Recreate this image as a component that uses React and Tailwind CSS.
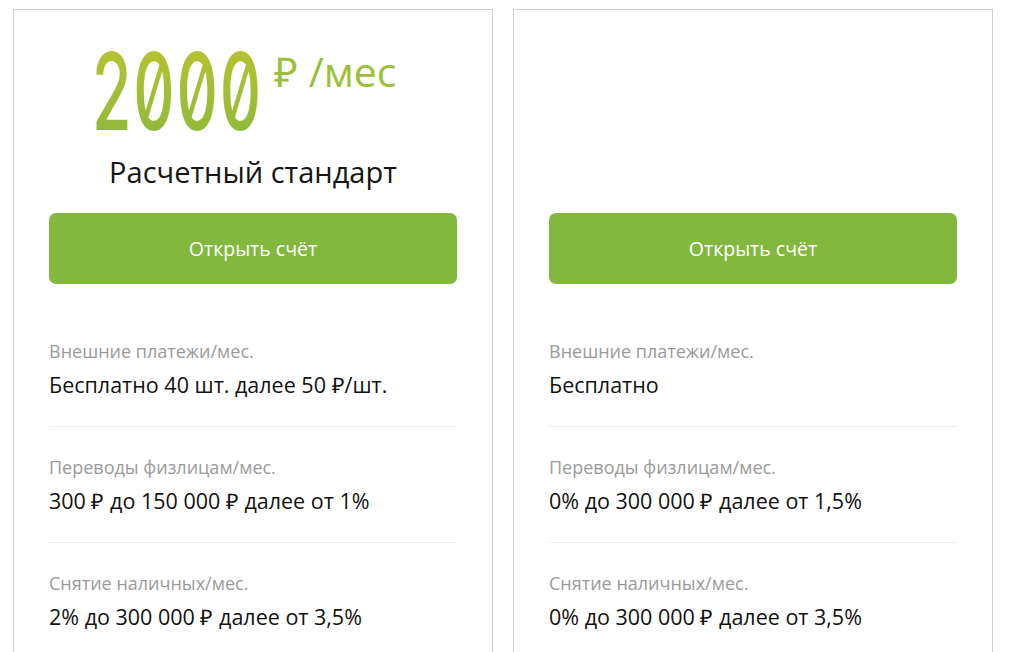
const plans = [
  {
    price: true,
    rows: [
      ['Внешние платежи/мес.', 'Бесплатно 40 шт. далее 50 ₽/шт.'],
      ['Переводы физлицам/мес.', '300 ₽ до 150 000 ₽ далее от 1%'],
      ['Снятие наличных/мес.', '2% до 300 000 ₽ далее от 3,5%'],
    ],
  },
  {
    price: false,
    rows: [
      ['Внешние платежи/мес.', 'Бесплатно'],
      ['Переводы физлицам/мес.', '0% до 300 000 ₽ далее от 1,5%'],
      ['Снятие наличных/мес.', '0% до 300 000 ₽ далее от 3,5%'],
    ],
  },
]

function PlanCard({ plan }) {
  return (
    <div className="w-[480px] h-[660px] shrink-0 border border-[#cfcfcf] border-b-0 bg-white px-[35px] font-['Open_Sans',sans-serif]">
      <div className="h-[203px]">
        {plan.price && (
          <>
            <div className="flex items-start pt-[28px] pl-[43px]">
              <div className="w-[165px] h-[107px] shrink-0">
                <span className="inline-block whitespace-nowrap origin-left scale-x-[0.6] text-[107px] leading-none font-['Inter',sans-serif] font-medium slashed-zero tracking-[3px] bg-gradient-to-b from-[#bac32d] to-[#8cb83c] bg-clip-text text-transparent">
                  2000
                </span>
              </div>
              <span className="ml-[17px] mt-[13px] text-[41px] leading-none text-[#9cc03b] whitespace-nowrap">
                ₽ /мес
              </span>
            </div>
            <div className="mt-[12px] text-center text-[29px] leading-none text-[#151515]">
              Расчетный стандарт
            </div>
          </>
        )}
      </div>
      <button className="w-full h-[71px] rounded-[7px] bg-[#82b83e] text-white text-[19.5px]">
        Открыть счёт
      </button>
      <div className="pt-[55px]">
        {plan.rows.map(([label, value], i) => (
          <div
            key={i}
            className={i < plan.rows.length - 1 ? 'border-b border-[#ebebeb] pb-[27px] mb-[28px]' : ''}
          >
            <div className="text-[18px] leading-[24px] text-[#9a9a9a]">{label}</div>
            <div className="mt-[8px] text-[21.5px] leading-[28px] text-[#111]">{value}</div>
          </div>
        ))}
      </div>
    </div>
  )
}

export default function App() {
  return (
    <div className="w-[1013px] h-[652px] overflow-hidden bg-white">
      <div className="flex gap-[20px] pt-[9px] pl-[13px]">
        {plans.map((p, i) => (
          <PlanCard key={i} plan={p} />
        ))}
      </div>
    </div>
  )
}
